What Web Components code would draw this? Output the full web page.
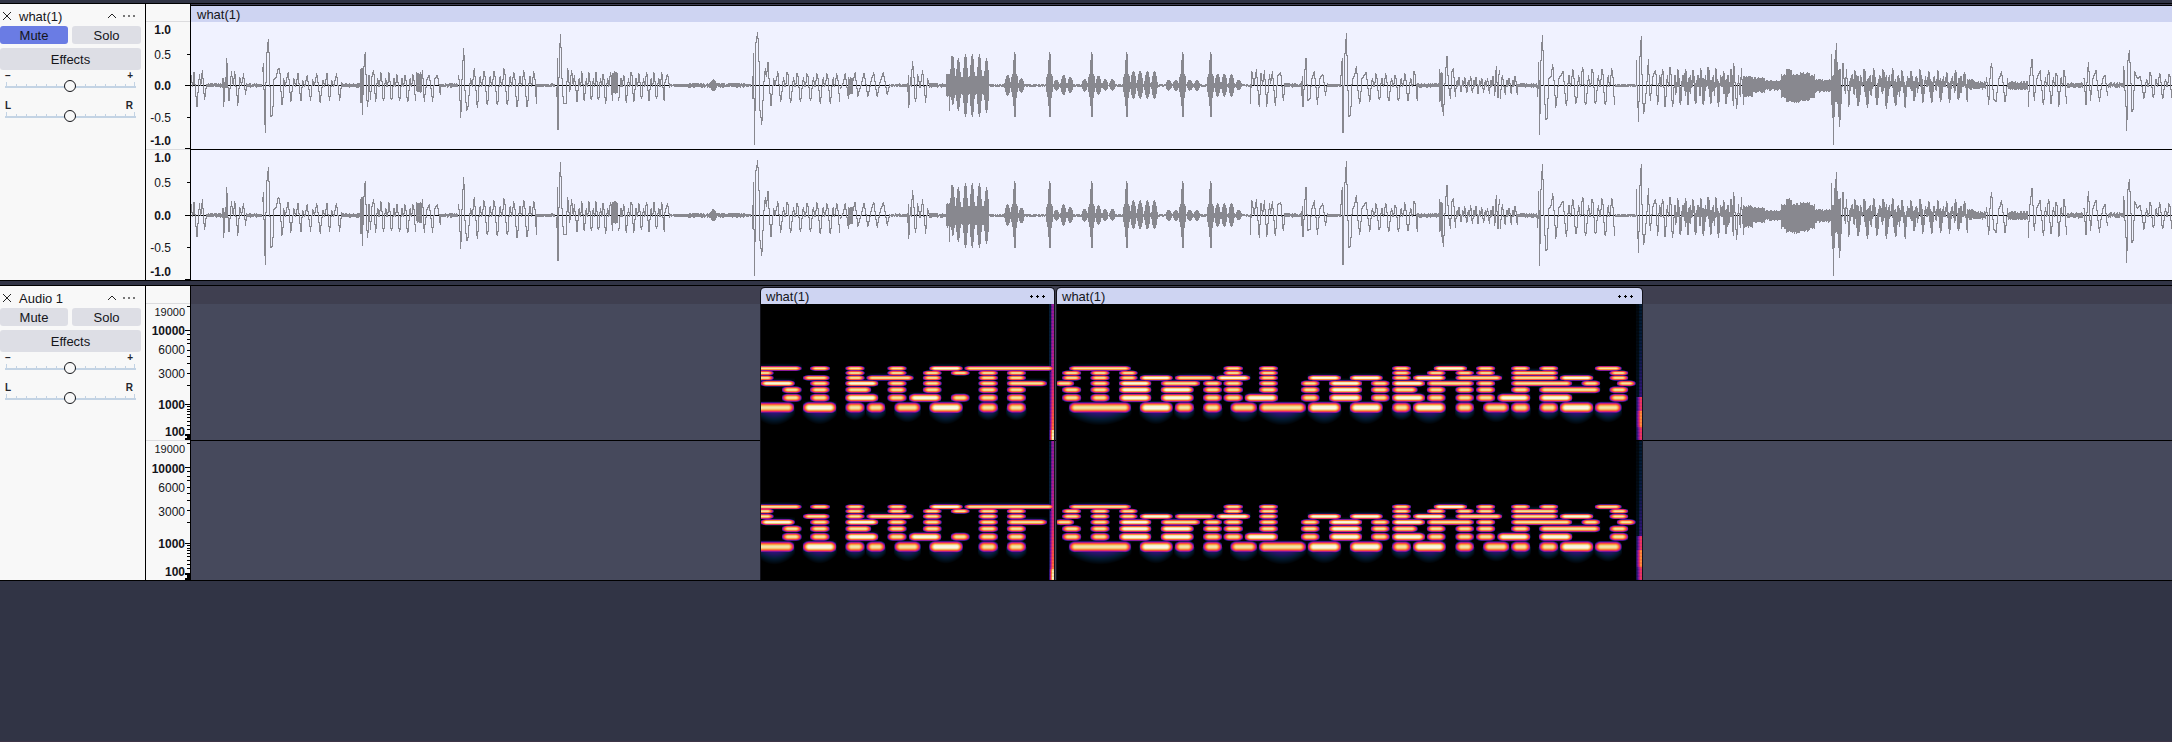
<!DOCTYPE html>
<html lang="en">
<head>
<meta charset="utf-8">
<title>Audio editor tracks</title>
<style>
html, body { margin: 0; min-height: 100%; background: #313445; }
body { font: 13px/16px "Liberation Sans", Arial, sans-serif; color: #14151a; }
</style>
</head>
<body>
<audio-workspace>
  <audio-track name="what(1)" muted>
    <track-panel slot="panel" name="what(1)" muted></track-panel>
    <amplitude-ruler slot="ruler"></amplitude-ruler>
    <wave-clip name="what(1)"></wave-clip>
  </audio-track>
  <audio-track name="Audio 1" kind="spectrogram">
    <track-panel slot="panel" name="Audio 1"></track-panel>
    <frequency-ruler slot="ruler"></frequency-ruler>
    <spectral-clip name="what(1)" start="761" length="293"></spectral-clip>
    <spectral-clip name="what(1)" start="1057" length="585"></spectral-clip>
  </audio-track>
</audio-workspace>

<script>
class Base extends HTMLElement {
  render(html) { this.attachShadow({ mode: 'open' }).innerHTML = html; }
}

customElements.define('audio-workspace', class extends Base {
  connectedCallback() {
    this.render(`<style>
      :host { display: block; box-sizing: border-box; min-height: 100vh; padding-top: 3px; background: #313445; border-bottom: 1px solid #3d3547; }
      main { display: flex; flex-direction: column; gap: 4px; }
    </style><main><slot></slot></main>`);
  }
});

customElements.define('audio-track', class extends Base {
  connectedCallback() {
    this.render(`<style>
      :host { display: grid; grid-template-columns: 145px 44px minmax(0, 1fr); column-gap: 1px; background: #000; border-block: 1px solid #000; }
      .lane { display: flex; gap: 1px; min-width: 0; overflow: hidden; background: #3d3b50; padding-top: 1px; }
      :host([kind=spectrogram]) .lane { padding-left: 569px;
        background: linear-gradient(#3f3f50 18px, #46495c 18px 154px, #000 154px 155px, #46495c 155px); }
    </style>
    <slot name="panel"></slot><slot name="ruler"></slot>
    <div class="lane"><slot></slot></div>`);
  }
});

customElements.define('track-panel', class extends Base {
  connectedCallback() {
    this.render(`<style>
      :host { display: block; background: #f8f8f8; }
      .box { display: flex; flex-direction: column; padding-right: 4px; }
      header { display: flex; align-items: center; height: 22px; padding-top: 2px; box-sizing: border-box; }
      h2 { flex: 1; margin: 0; padding: 1px 0 0 5px; font: inherit; }
      button { border: 0; padding: 0; font: inherit; color: inherit; background: #dddee5; border-radius: 3px; }
      header button { background: none; display: flex; }
      .pair { display: grid; grid-template-columns: 68px 1fr; gap: 4px; }
      .pair button { height: 18px; padding-top: 2px; }
      .fx { height: 22px; margin: 4px 0 2px; padding-top: 2px; }
      .on { background: #6a7ce4; }
      .slider + .slider { margin-top: 10px; }
      .ends { display: flex; justify-content: space-between; height: 8px; padding: 0 8px 0 5px; font: bold 10px/8px "Liberation Sans", Arial, sans-serif; color: #25262c; }
      .rail { display: grid; margin: 0 5px; height: 12px; }
      .rail > * { grid-area: 1 / 1; }
      input { appearance: none; width: 129px; height: 12px; margin: 0; background: none; }
      input::-webkit-slider-thumb { appearance: none; box-sizing: border-box; width: 12px; height: 12px; border-radius: 50%; border: 1px solid #14151a; background: #f8f8f8; }
    </style>
    <div class="box">
      <header>
        <button aria-label="Close track"><svg width="14" height="14"><path d="M3 3l8 8M11 3l-8 8" stroke="#222" fill="none"/></svg></button>
        <h2></h2>
        <button aria-label="Collapse"><svg width="14" height="14"><path d="M3 9l4-4 4 4" stroke="#222" fill="none"/></svg></button>
        <button aria-label="Track menu"><svg width="22" height="14"><path d="M4 6h2v2h-2zM9 6h2v2h-2zM14 6h2v2h-2z" fill="#777"/></svg></button>
      </header>
      <div class="pair"><button class="mute">Mute</button><button>Solo</button></div>
      <button class="fx">Effects</button>
      ${this.slider('Volume', '–', '+')}${this.slider('Pan', 'L', 'R')}
    </div>`);
    this.shadowRoot.querySelector('h2').textContent = this.getAttribute('name');
    if (this.hasAttribute('muted')) this.shadowRoot.querySelector('.mute').classList.add('on');
  }
  slider(label, a, b) {
    let ticks = '';
    for (const x of [11, 21, 31, 41, 51, 80, 90, 100, 110, 120]) ticks += `M${x} 4h1v2h-1z`;
    return `<div class="slider"><div class="ends"><span>${a}</span><span>${b}</span></div>
      <div class="rail"><svg width="131" height="12" aria-hidden="true"><path fill="#c3d3e4" d="M0 6h131v2H0zM1 2h1v4h-1zM129 2h1v4h-1z${ticks}"/></svg>
      <input type="range" aria-label="${label}"></div></div>`;
  }
});

const rulerStyle = `<style>
  :host { display: block; background: #f8f8f8; }
  svg { display: block; font: 12px "Liberation Sans", Arial, sans-serif; }
  text { text-anchor: end; fill: #14151a; }
  .b { font-weight: bold; } .s { font-size: 11px; }
  .head { height: 17px; border-bottom: 1px solid #dcdcde; }
  .rule { height: 1px; background: #dcdcde; }
</style>`;

customElements.define('amplitude-ruler', class extends Base {
  connectedCallback() {
    const part = (h, y, t) => `<svg width="44" height="${h}">` +
      ['1.0', '0.5', '0.0', '-0.5', '-1.0'].map((s, i) => `<text x="25" y="${y[i] + 4}" class="${i % 2 ? '' : 'b'}">${s}</text>`).join('') +
      `<path d="M41 ${t[0]}h3v1h-3zM39 ${t[1]}h5v1h-5zM41 ${t[2]}h3v1h-3zM39 ${t[3]}h5v1h-5z"/></svg>`;
    this.render(rulerStyle + '<div class="head"></div>' + part(127, [8, 33, 64, 96, 119], [32, 63, 95, 126]) +
      '<div class="rule"></div>' + part(130, [8, 33, 66, 98, 122], [32, 65, 97, 129]));
  }
});

customElements.define('frequency-ruler', class extends Base {
  connectedCallback() {
    const part = (h, y, d) => `<svg width="44" height="${h}">` +
      ['19000', '10000', '6000', '3000', '1000', '100'].map((s, i) => `<text x="39" y="${y[i] + 4}" class="${i === 0 ? 's' : [1, 4, 5].includes(i) ? 'b' : ''}">${s}</text>`).join('') +
      `<path d="${[2, 30, 35, 39, 46, 52, 59, 69, 81, 102, 105, 107, 110, 113, 117, 121, 125].map(t => `M41 ${t > 90 ? t + d : t}h3v1h-3z`).join('')}M39 26h5v1h-5zM39 ${100 + d}h5v1h-5zM39 ${130 + d}h5v6h-3v-4h-2zM39 ${h - 2}h5v2h-5z"/></svg>`;
    this.render(rulerStyle + '<div class="head"></div>' + part(136, [8, 27, 46, 70, 101, 128], 0) +
      '<div class="rule"></div>' + part(139, [8, 28, 47, 71, 103, 131], 2));
  }
});

/* Waveform shape. Each block has an origin, a horizontal scale and commands:
   L x,y ...            line through the points (256 is the zero level, 3 units to a pixel)
   N x0 x1 a            low noise of a units
   O x0 x1 period up down   voiced oscillation
   F x0 x1 up down      dense band
   B x up down half     rounded pulse
   S x ...              tall narrow pulses */
const SHAPE = [[180, 2.376, `
L 26,225 30,260 33,217 40,318 46,222 49,255 53,210 58,298 63,252
N 63 100 4
L 100,262 102,235 104,320 107,232 109,262 111,175 113,240 116,302 122,215 126,255 130,215 137,315 142,232 146,255 151,220 155,284 158,255
N 158 196 4
L 196,215 198,190 202,398 205,172 210,117 213,240 216,350 220,345 222,240 228,232 233,205 237,207 241,314 244,310 246,236 250,258 253,236 257,217 263,305 270,236 275,258 280,220 287,302 291,240 296,258 302,225 310,302 315,238 319,256 325,220 333,308 339,240 344,258 349,220 355,302 360,240 365,258 372,220 379,302 384,248
N 384 428 4
L 428,208 430,308 432,205 433,342 436,225 438,175 440,157 443,290 446,320 449,225 452,298 456,230 460,210 464,305
O 464 560 19 222 305
F 562 576 222 270
L 576,210 580,305 586,240 592,225 600,305 605,235 612,225 618,282
N 620 662 4
L 662,225 667,352 671,200 674,145 677,270 681,330 684,320 690,235 694,260 699,205 706,322
O 706 848 23 210 314
N 848 893 3
L 895,290 897,175 898,388 902,140 904,102 907,225 911,310 917,310 921,205 926,275 930,210 934,255 937,225 943,304
O 943 1028 17 221 304
F 1028 1042 220 275
O 1042 1150 18 221 300
L 1150,256 1158,222 1163,262
N 1163 1205 2
N 1205 1258 5
B 1266 239 272 9
N 1275 1358 5
L 1360,295 1362,160 1365,432 1368,130 1372,97 1375,155 1378,330 1382,372 1385,300 1387,250 1390,205 1393,230 1397,186 1400,260 1404,316 1410,236 1414,255 1420,215 1427,305
O 1427 1568 23 218 303`],
[840, 2.376, `
L 0,265 8,248 12,220 16,256 20,295
F 20 31 237 278
L 31,240 36,217 42,288 52,245 57,220 66,288 74,240 80,217 88,290 96,240 103,217 112,284 118,252
N 119 160 3
L 160,275 163,225 163,323 167,232 169,258 172,184 176,240 176,285 180,305 184,222 190,262 196,210 203,307 208,235 212,255
N 212 253 4
F 253 266 226 285
L 260,332 262,230 266,168 268,310
F 266 350 234 278
B 267 168 315 6
B 280 175 332 7
B 297 162 350 7
B 313 162 350 7
B 330 162 350 7
B 347 175 338 7
N 350 975 1
B 397 225 285 8
B 430 235 277 8
B 513 240 270 8
B 530 225 284 8
B 546 232 277 8
B 580 238 273 8
B 613 228 282 8
B 629 238 270 8
B 646 238 270 8
B 696 213 295 8
B 712 213 295 8
B 729 213 295 8
B 746 213 295 8
B 780 240 270 8
B 797 240 270 8
B 830 240 270 8
B 847 240 270 8
B 896 222 288 8
B 912 222 288 8
B 929 222 288 8
B 946 240 268 8
S 413 496 596 679 812 879
L 975,310 978,213 984,255 989,208 996,320 1000,220 1004,255 1008,212 1014,318 1020,222 1023,250 1027,214 1034,315 1040,225 1047,218 1053,300 1057,255
N 1057 1096 4
L 1096,285 1098,230 1100,318 1104,215 1107,175 1111,300 1117,295 1120,240 1127,213 1134,312 1140,235 1147,222 1153,285 1158,252
N 1158 1190 3
L 1190,225 1193,175 1195,398 1199,170 1203,100 1206,230 1209,350 1213,345 1217,240 1222,228 1227,198 1231,280 1235,310 1240,235 1250,217 1258,302
O 1258 1372 23 220 303
N 1372 1425 4
F 1425 1433 222 300
L 1425,208 1430,318 1434,345 1438,220 1442,168 1446,260 1450,295 1454,215 1457,206 1462,290
O 1462 1556 13 230 280
L 1556,275 1559,198 1563,293 1566,210`],
[1500, 2.333, `
L 0,295 5,225 12,282
O 12 40 15 233 277
N 40 88 4
L 88,290 90,186 92,402 96,150 99,106 102,240 106,358 110,355 113,235 118,232 123,192 126,250 130,322 137,235 147,214 154,317
O 154 268 22.5 208 315
N 270 318 2
L 318,180 320,280 323,365 326,180 329,108 332,280 335,340 340,290 346,178 350,300 357,225 363,210 367,310
O 367 545 17 207 314
O 410 545 11 232 282
L 543,250 545,190 552,325 556,225 560,290 563,205 568,312
F 568 590 234 284
F 590 618 237 272
F 618 656 245 265
F 656 668 228 288
F 668 680 213 300
F 680 700 228 303
F 700 722 222 297
F 722 735 230 288
F 735 773 243 270
F 774 781 232 312
F 783 795 212 300
L 773,163 778,432 781,185 785,130 788,300 792,378 796,300 800,190 805,280 808,208 813,300
O 813 945 22 207 318
O 813 945 13 228 285
O 945 1090 22 212 303
O 945 1090 14 236 274
F 1090 1105 243 262
F 1105 1135 250 262
L 1135,232 1140,312 1144,210 1147,190 1151,295 1157,305 1163,240 1170,213 1178,305 1185,235
F 1187 1232 250 263
L 1232,320 1236,225 1241,178 1246,300 1252,235 1260,212 1267,313
O 1267 1322 19 215 313
F 1325 1362 253 258
L 1362,235 1367,312 1370,215 1373,187 1377,300 1383,235 1390,212 1398,305 1405,240 1411,225 1417,285
F 1420 1455 253 257
L 1455,200 1460,320 1462,392 1465,180 1468,150 1472,250 1474,335 1478,325 1480,215 1487,235 1493,228 1502,290
O 1502 1568 23 224 296`]];

const ORIGIN = 191;
function envelope() {
  const cols = new Map();
  let seed = 7;
  const rnd = () => (seed = (seed * 16807) % 2147483647) / 2147483647;
  const put = (x, a, b) => {
    x = Math.floor(x);
    const c = cols.get(x);
    if (c) { c[0] = Math.min(c[0], a, b); c[1] = Math.max(c[1], a, b); }
    else cols.set(x, [Math.min(a, b), Math.max(a, b)]);
  };
  for (const [off, k, text] of SHAPE) {
    const X = x => off + x / k - ORIGIN, Y = y => (y - 256) / 3;
    const line = pts => {
      for (let i = 1; i < pts.length; i++) {
        const [ax, ay] = pts[i - 1], [bx, by] = pts[i];
        const n = Math.max(1, Math.ceil((bx - ax) * 2));
        let py = ay;
        for (let j = 0; j <= n; j++) {
          const y = ay + (by - ay) * j / n;
          put(X(ax + (bx - ax) * j / n), Y(py), Y(y));
          py = y;
        }
      }
    };
    for (const row of text.trim().split('\n')) {
      const [op, ...rest] = row.trim().split(' ');
      const v = rest.map(Number);
      if (op === 'L') line(rest.map(p => p.split(',').map(Number)));
      if (op === 'N') for (let x = X(v[0]); x < X(v[1]); x++) put(x, -(.4 + rnd() * v[2] / 2.4), .4 + rnd() * v[2] / 3);
      if (op === 'F') for (let x = X(v[0]); x < X(v[1]); x++) put(x, Y(v[2]) - rnd() * 2, Y(v[3]) + rnd() * 2);
      if (op === 'O') {
        const [a, b, , up, dn] = v, n = Math.max(1, Math.round((b - a) / v[2])), p = (b - a) / n, pts = [[a, dn]];
        for (let i = 0; i < n; i++) {
          const s = a + i * p, j = (rnd() - .5) * 12;
          pts.push([s + p * .1, dn - 14], [s + p * .2, 250], [s + p * .3, 256 + (up - 256) * .6], [s + p * .44, 260], [s + p * .56, 248], [s + p * .64, up + j], [s + p * .76, up + j + 8], [s + p * .86, 262], [s + p * .92, dn - 12], [s + p, dn + (rnd() - .5) * 12]);
        }
        line(pts);
      }
      if (op === 'B') {
        const c = X(v[0]), w = v[3] / k;
        for (let x = Math.ceil(c - w); x <= c + w; x++) { const u = Math.abs(x - c) / w, f = Math.max(0, 1 - u * u); put(x, Y(v[1]) * f, Y(v[2]) * f); }
      }
      if (op === 'S') for (const s of v) {
        const c = Math.round(X(s));
        for (const [d, t, q] of [[-3, 8, 6], [-2, 11, 11], [-1, 25, 20], [0, 33, 31], [1, 31, 31], [2, 11, 12], [3, 9, 6]]) put(c + d, -t, q);
      }
    }
  }
  return cols;
}

customElements.define('wave-clip', class extends Base {
  connectedCallback() {
    this.render(`<style>
      :host { display: block; flex: 1; min-width: 0; overflow: hidden; background: #f0f2ff; border-top: 1px solid #000; }
      header { height: 16px; line-height: 17px; padding-left: 6px; background: #ced4f2; }
      canvas { display: block; }
      canvas + canvas { border-top: 1px solid #000; }
    </style><header></header><canvas width="1981" height="127"></canvas><canvas width="1981" height="130"></canvas>`);
    this.shadowRoot.querySelector('header').textContent = this.getAttribute('name');
    const env = envelope();
    [...this.shadowRoot.querySelectorAll('canvas')].forEach((c, i) => {
      const g = c.getContext('2d'), zero = i ? 65 : 63;
      g.fillStyle = '#000';
      g.fillRect(0, zero, c.width, 1);
      g.fillStyle = '#88888f';
      for (const [x, [a, b]] of env) {
        const s = i ? 1.03 : 1, t = Math.round(a * s), d = Math.round(b * s);
        g.fillRect(x, zero + t, 1, Math.max(1, d - t + 1));
      }
    });
  }
});

/* Energy bands, lowest row last. [origin, row, from, to, ...] with three units to a pixel. */
const BANDS = [
  [750, 0, 20,154, 181,239, 287,343, 413,469, 539,637, 644,912],
  [750, 1, 15,70, 287,343, 413,469, 519,574, 603,658, 686,743, 771,827],
  [750, 2, 15,70, 160,238, 287,343, 350,490, 519,574, 686,743, 771,827],
  [750, 3, 33,133, 181,238, 287,384, 413,469, 519,574, 686,743, 771,890],
  [750, 4, 97,154, 181,238, 287,363, 413,469, 519,574, 686,743, 771,827],
  [750, 5, 97,154, 181,238, 287,384, 413,469, 478,573, 603,658, 686,743, 771,827],
  [750, 6, 15,132, 160,258, 287,343, 350,405, 434,511, 539,637, 686,743, 771,827],
  [1050, 0, 58,242, 521,578, 627,683],
  [1050, 1, 37,93, 122,178, 208,262, 521,578, 627,683],
  [1050, 2, 37,93, 122,178, 208,262, 270,367, 375,494, 500,600, 627,683, 774,872, 900,997],
  [1050, 3, 15,72, 122,178, 208,303, 333,450, 460,515, 521,578, 627,683, 753,808, 838,935],
  [1050, 4, 37,93, 122,178, 208,303, 333,430, 460,515, 521,578, 627,683, 753,808, 838,935],
  [1050, 5, 37,93, 122,178, 208,303, 333,430, 460,515, 521,578, 585,683, 753,808, 838,935],
  [1050, 6, 58,242, 270,367, 375,431, 460,515, 542,620, 627,767, 774,872, 900,997],
  [1360, 0, 97,152, 222,320, 349,405, 454,510, 538,594, 705,784],
  [1360, 1, 97,152, 201,256, 287,341, 349,405, 454,594, 749,804],
  [1360, 2, 97,152, 160,256, 287,426, 454,594, 600,699, 749,804],
  [1360, 3, 33,88, 97,194, 201,341, 349,405, 454,636, 665,720, 771,826],
  [1360, 4, 33,88, 97,172, 201,256, 287,341, 349,405, 454,510, 538,720, 749,804],
  [1360, 5, 33,88, 97,194, 201,256, 287,341, 349,405, 413,510, 538,636, 749,804],
  [1360, 6, 97,152, 160,256, 287,341, 370,447, 454,510, 538,594, 600,699, 705,784]];
const ROWS = [[64, 68.6, 73.5, 79, 85.4, 93.4, 103.2], [65.4, 69.8, 75, 80.8, 87.4, 95.4, 105.4]];
const HALF = [2.2, 2.2, 2.4, 2.6, 3, 3.6, 4.8];
const MAP = [[0, 0, 0, 0], [.14, 3, 28, 52], [.28, 48, 18, 120], [.42, 130, 25, 155], [.56, 215, 35, 120], [.68, 248, 80, 60], [.8, 252, 150, 60], [.9, 240, 212, 130], [1, 250, 246, 228]];
function heat(v) {
  v = Math.max(0, Math.min(1, v));
  let i = 1;
  while (v > MAP[i][0]) i++;
  const a = MAP[i - 1], b = MAP[i], t = (v - a[0]) / (b[0] - a[0]);
  return [1, 2, 3].map(k => a[k] + (b[k] - a[k]) * t);
}

customElements.define('spectral-clip', class extends Base {
  connectedCallback() {
    const start = +this.getAttribute('start'), w = +this.getAttribute('length');
    this.render(`<style>
      :host { display: block; flex: none; border: 1px solid #12121a; border-bottom: 0; border-radius: 5px 5px 0 0; overflow: hidden; background: #000; }
      header { display: flex; justify-content: space-between; height: 16px; line-height: 17px; padding: 0 7px 0 5px; background: #ced4f2; }
      button { display: flex; border: 0; padding: 0; background: none; }
      canvas { display: block; }
      canvas + canvas { border-top: 1px solid #000; }
    </style><header><span></span><button aria-label="Clip menu"><svg width="20" height="16"><path d="M4 7h1v1h1v1h-1v1h-1v-1h-1v-1h1zM10 7h1v1h1v1h-1v1h-1v-1h-1v-1h1zM16 7h1v1h1v1h-1v1h-1v-1h-1v-1h1z"/></svg></button></header>
    <canvas width="${w}" height="136"></canvas><canvas width="${w}" height="139"></canvas>`);
    this.shadowRoot.querySelector('span').textContent = this.getAttribute('name');
    this.shadowRoot.querySelectorAll('canvas').forEach((c, i) => this.paint(c, i, start, w));
  }
  paint(c, ch, start, w) {
    const h = c.height, e = new Float32Array(w * h);
    const up = (x, y, v) => { if (x >= 0 && x < w && y >= 0 && y < h && v > e[y * w + x]) e[y * w + x] = v; };
    for (const [org, r, ...seg] of BANDS) for (let s = 0; s < seg.length; s += 2) {
      const a = org + seg[s] / 3 - start, b = org + seg[s + 1] / 3 - start;
      if (b < 0 || a > w || (start < 1000) !== (org < 1000)) continue;
      const cy = ROWS[ch][r] + .4, hh = HALF[r], mid = (a + b) / 2, W = (b - a) / 2, peak = W > 14 && W < 18 ? 1.02 : .94;
      for (let x = Math.floor(a - 2); x <= b + 2; x++) {
        const dx = Math.min(x + .5 - a, b - x - .5), nx = dx < 0 ? 1 - dx / 2 : Math.max(0, 1 - dx / 6);
        for (let y = Math.floor(cy - 8); y < cy + 26; y++) {
          const dy = y + .5 - cy, ny = Math.abs(dy) / hh;
          up(x, y, peak - .56 * ny * ny - .56 * nx * nx);
          const u = (x + .5 - mid) / (W + 1);
          if (r === 6 && dy > 0 && Math.abs(u) < 1) up(x, y, .4 * (1 - dy / (8 + Math.min(W, 18) * .55 * (1 - u * u))) * Math.sqrt(1 - u * u));
          if (dy < 0 && dy > -7 && W > 14 && Math.abs(u) < 1) up(x, y, .24 * (1 + dy / (hh + 3)) * Math.sqrt(1 - u * u));
        }
      }
    }
    const first = start < 1000, sw = first ? 5 : 6;
    for (let y = 0; y < h; y++) {
      const t = y / h, wob = .03 * Math.sin(y * 1.9);
      let v = first ? .44 + .34 * t * t + (t > .92 ? .18 : 0) : (t < .68 ? .12 + .34 * t * t : .6) + (t > .78 && t < .9 ? .16 : 0);
      for (let x = 0; x < sw; x++) {
        let m = Math.min(1, (x + 2) / sw);
        if (x < (first ? 2 * (1 - t) : t < .68 ? 3 : 0)) m = .3;
        up(w - sw + x, y, (v + wob) * m);
      }
    }
    const g = c.getContext('2d'), img = g.createImageData(w, h);
    for (let p = 0; p < w * h; p++) { const q = heat(e[p]); img.data.set([q[0], q[1], q[2], 255], p * 4); }
    g.putImageData(img, 0, 0);
  }
});
</script>
</body>
</html>
